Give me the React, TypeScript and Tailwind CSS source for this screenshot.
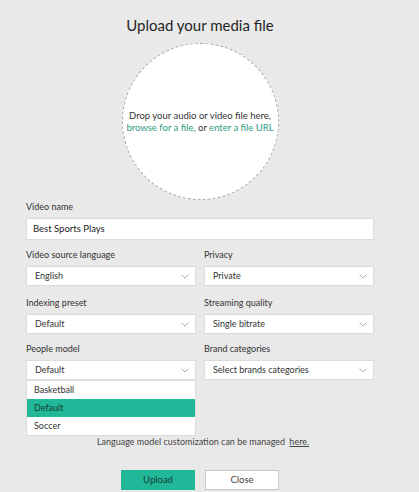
import React from "react";

const font = { fontFamily: 'Lato, "Noto Sans", sans-serif' };

function Chevron() {
  return (
    <svg width="8" height="5" viewBox="0 0 8 5" className="shrink-0">
      <path d="M0.5 0.5 L4 4 L7.5 0.5" fill="none" stroke="#999" strokeWidth="0.8" />
    </svg>
  );
}

function Select({ value }: { value: string }) {
  return (
    <div className="flex h-[20px] items-center justify-between border border-[#dcdcdc] bg-white pl-[8px] pr-[6px] text-[9px] text-[#333]">
      <span>{value}</span>
      <Chevron />
    </div>
  );
}

function Label({ children }: { children: React.ReactNode }) {
  return <div className="mb-[5px] text-[9px] leading-[12px] text-[#333]">{children}</div>;
}

export default function App() {
  return (
    <div className="h-[492px] w-[419px] overflow-hidden bg-[#e9e9e9]" style={font}>
      <div className="ml-[26px] w-[348px]">
        <div className="pt-[14px] text-center text-[15px] leading-[22px] text-[#252525]">Upload your media file</div>
        <div className="mt-[7px] flex justify-center">
          <div className="flex h-[157px] w-[157px] flex-col items-center justify-center rounded-full border border-dashed border-[#a8a8a8] bg-white text-center text-[9.5px] leading-[12px] text-[#333]">
            <div>Drop your audio or video file here,</div>
            <div>
              <span className="text-[#2e9b80]">browse for a file,</span> or{" "}
              <span className="text-[#2e9b80]">enter a file URL</span>
            </div>
          </div>
        </div>

        <div className="mt-[1px]">
          <Label>Video name</Label>
          <div className="flex h-[22px] items-center border border-[#dcdcdc] bg-white px-[6px] text-[9.5px] text-[#222]">
            Best Sports Plays
          </div>

          <div className="mt-[9px] grid grid-cols-2 gap-x-[8px]">
            <div>
              <Label>Video source language</Label>
              <Select value="English" />
            </div>
            <div>
              <Label>Privacy</Label>
              <Select value="Private" />
            </div>
          </div>

          <div className="mt-[11px] grid grid-cols-2 gap-x-[8px]">
            <div>
              <Label>Indexing preset</Label>
              <Select value="Default" />
            </div>
            <div>
              <Label>Streaming quality</Label>
              <Select value="Single bitrate" />
            </div>
          </div>

          <div className="mt-[9px] grid grid-cols-2 gap-x-[8px]">
            <div className="relative">
              <Label>People model</Label>
              <Select value="Default" />
              <div className="absolute left-0 right-0 top-[37px] z-10 border border-[#dcdcdc] bg-white text-[9px] text-[#333]">
                <div className="flex h-[18px] items-center pl-[7px]">Basketball</div>
                <div className="flex h-[18px] items-center bg-[#20b898] pl-[7px] text-[#1b3b33]">Default</div>
                <div className="flex h-[18px] items-center pl-[7px]">Soccer</div>
              </div>
            </div>
            <div>
              <Label>Brand categories</Label>
              <Select value="Select brands categories" />
            </div>
          </div>
        </div>

        <div className="mt-[56px] pl-[6px] text-center text-[9px] leading-[12px] text-[#444]">
          Language model customization can be managed <span className="ml-[2px] underline">here.</span>
        </div>

        <div className="mt-[22px] flex justify-center gap-[10px]">
          <div className="flex h-[20px] w-[74px] items-center justify-center bg-[#20b898] text-[9.5px] text-[#1b3b33]">Upload</div>
          <div className="flex h-[20px] w-[74px] items-center justify-center border border-[#c8c8c8] bg-white text-[9.5px] text-[#444]">Close</div>
        </div>
      </div>
    </div>
  );
}
